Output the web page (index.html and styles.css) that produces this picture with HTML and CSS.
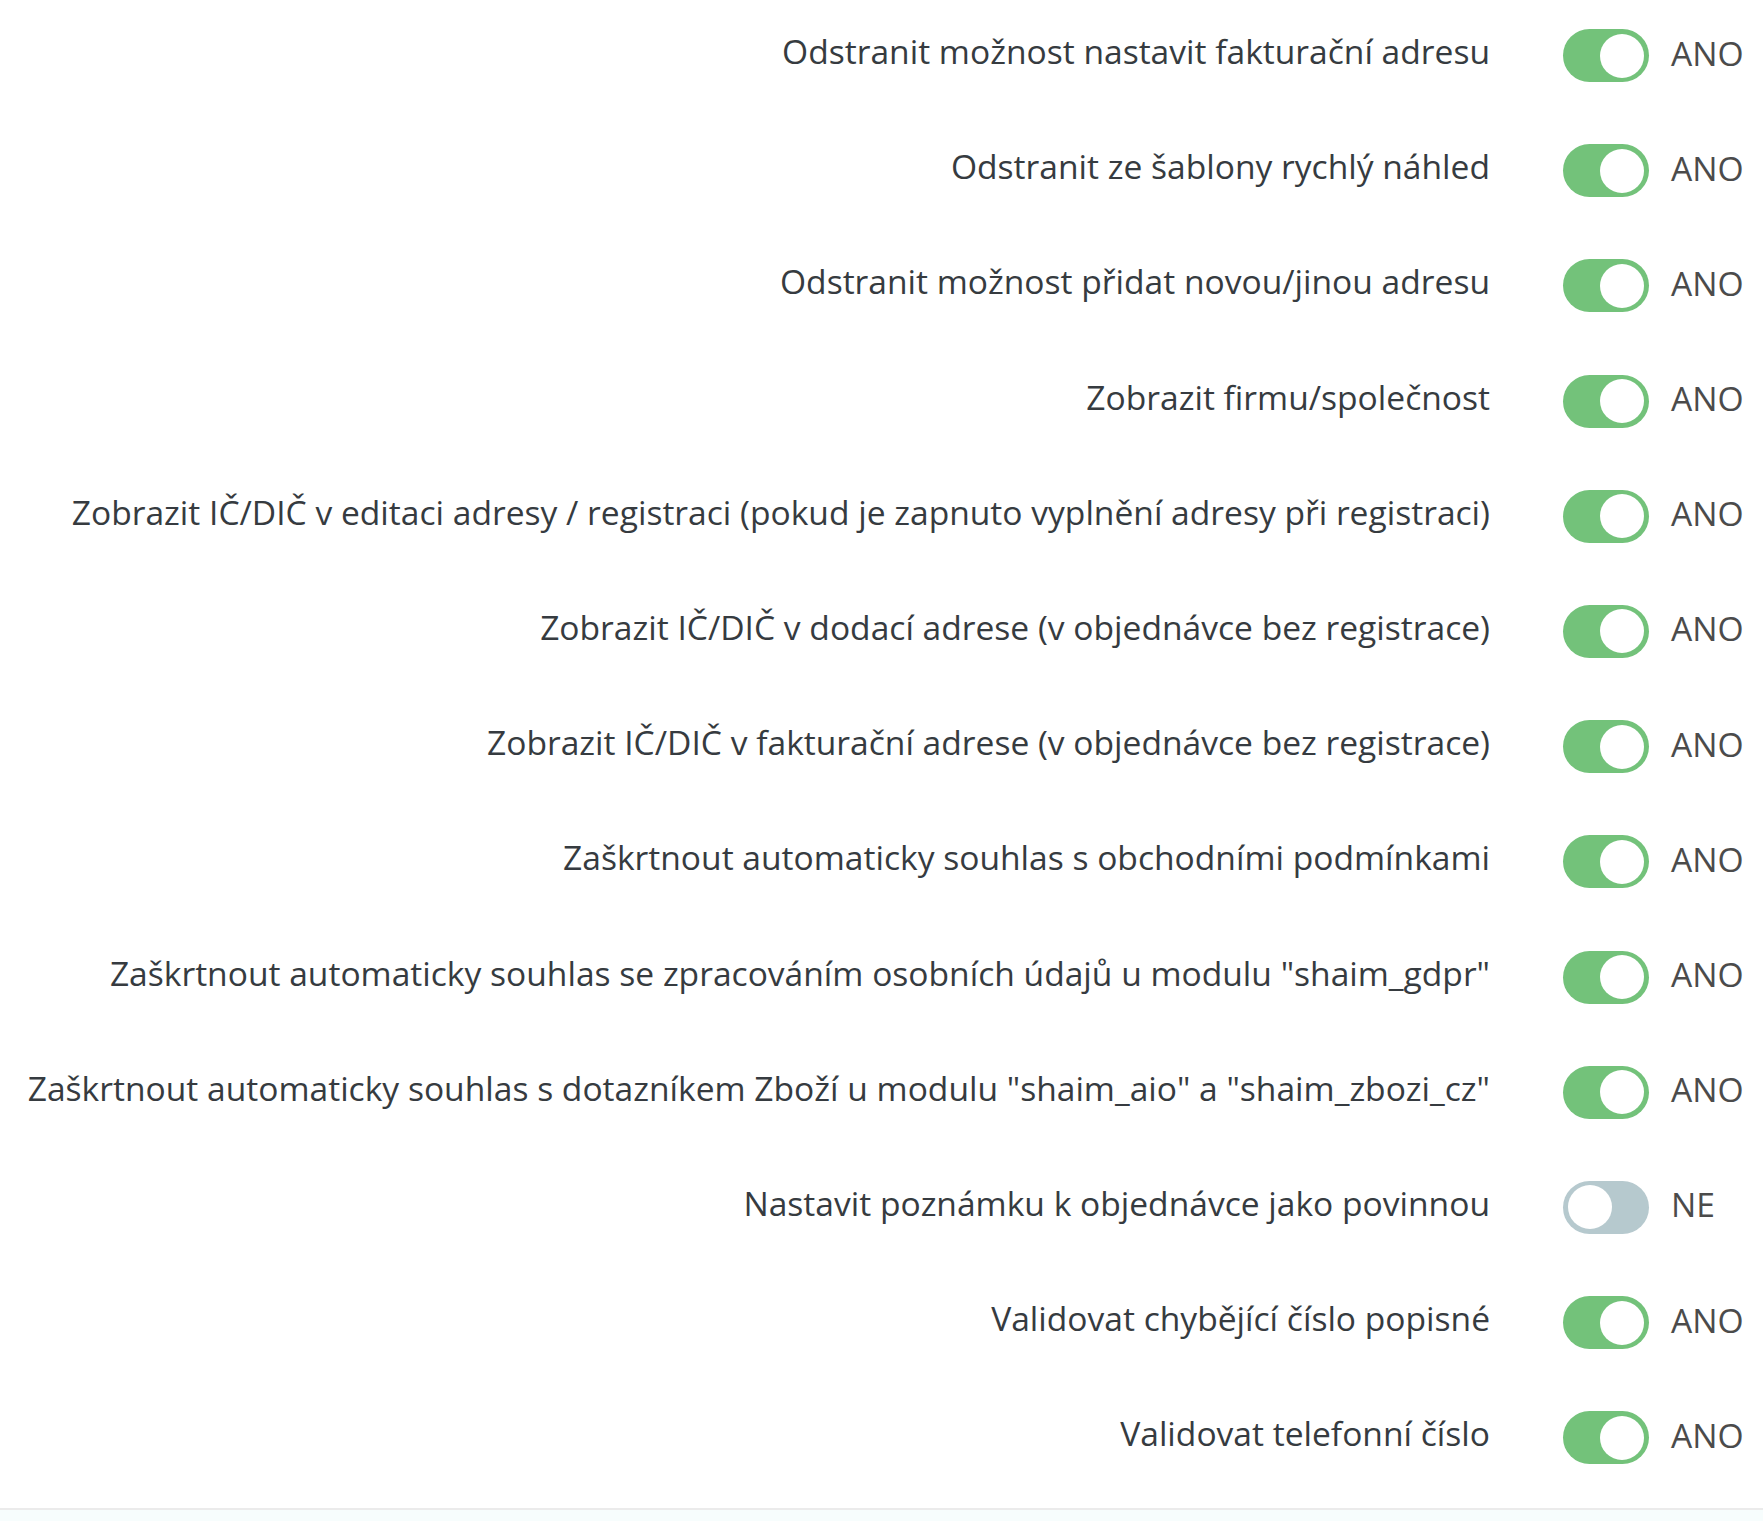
FILE: index.html
```html
<!DOCTYPE html>
<html lang="cs">
<head>
<meta charset="utf-8">
<title>Nastavení</title>
<link rel="stylesheet" href="styles.css">
</head>
<body>
<div class="settings">
  <div class="row"><div class="label">Odstranit možnost nastavit fakturační adresu</div><div class="control"><span class="switch on"><span class="knob"></span></span><span class="value">ANO</span></div></div>
  <div class="row"><div class="label">Odstranit ze šablony rychlý náhled</div><div class="control"><span class="switch on"><span class="knob"></span></span><span class="value">ANO</span></div></div>
  <div class="row"><div class="label">Odstranit možnost přidat novou/jinou adresu</div><div class="control"><span class="switch on"><span class="knob"></span></span><span class="value">ANO</span></div></div>
  <div class="row"><div class="label">Zobrazit firmu/společnost</div><div class="control"><span class="switch on"><span class="knob"></span></span><span class="value">ANO</span></div></div>
  <div class="row"><div class="label">Zobrazit IČ/DIČ v editaci adresy / registraci (pokud je zapnuto vyplnění adresy při registraci)</div><div class="control"><span class="switch on"><span class="knob"></span></span><span class="value">ANO</span></div></div>
  <div class="row"><div class="label">Zobrazit IČ/DIČ v dodací adrese (v objednávce bez registrace)</div><div class="control"><span class="switch on"><span class="knob"></span></span><span class="value">ANO</span></div></div>
  <div class="row"><div class="label">Zobrazit IČ/DIČ v fakturační adrese (v objednávce bez registrace)</div><div class="control"><span class="switch on"><span class="knob"></span></span><span class="value">ANO</span></div></div>
  <div class="row"><div class="label">Zaškrtnout automaticky souhlas s obchodními podmínkami</div><div class="control"><span class="switch on"><span class="knob"></span></span><span class="value">ANO</span></div></div>
  <div class="row"><div class="label">Zaškrtnout automaticky souhlas se zpracováním osobních údajů u modulu "shaim_gdpr"</div><div class="control"><span class="switch on"><span class="knob"></span></span><span class="value">ANO</span></div></div>
  <div class="row"><div class="label">Zaškrtnout automaticky souhlas s dotazníkem Zboží u modulu "shaim_aio" a "shaim_zbozi_cz"</div><div class="control"><span class="switch on"><span class="knob"></span></span><span class="value">ANO</span></div></div>
  <div class="row"><div class="label">Nastavit poznámku k objednávce jako povinnou</div><div class="control"><span class="switch off"><span class="knob"></span></span><span class="value">NE</span></div></div>
  <div class="row"><div class="label">Validovat chybějící číslo popisné</div><div class="control"><span class="switch on"><span class="knob"></span></span><span class="value">ANO</span></div></div>
  <div class="row"><div class="label">Validovat telefonní číslo</div><div class="control"><span class="switch on"><span class="knob"></span></span><span class="value">ANO</span></div></div>
</div>
<div class="footer"></div>
</body>
</html>
```

FILE: styles.css
```css
html, body {
  margin: 0;
  padding: 0;
  background: #ffffff;
}
body {
  font-family: "Open Sans", "Liberation Sans", sans-serif;
  color: #363b40;
}
.settings {
  padding-bottom: 10.4px;
  border-bottom: 2px solid #ebebeb;
}
.row {
  display: grid;
  grid-template-columns: 1fr 273px;
  align-items: center;
  height: 115.2px;
  box-sizing: border-box;
  padding-top: 25px;
  padding-bottom: 37.2px;
}
.label {
  text-align: right;
  font-size: 33.6px;
  line-height: 53px;
  white-space: nowrap;
  padding-bottom: 8px;
}
.control {
  display: flex;
  align-items: center;
  padding-left: 73px;
  height: 53px;
}
.switch {
  position: relative;
  display: block;
  width: 86px;
  height: 53px;
  border-radius: 27px;
  flex: none;
}
.switch.on { background: #73c27a; }
.switch.off { background: #b6c9ce; }
.knob {
  position: absolute;
  top: 4.5px;
  width: 44px;
  height: 44px;
  border-radius: 50%;
  background: #ffffff;
}
.switch.on .knob { right: 5px; }
.switch.off .knob { left: 5px; }
.value {
  margin-left: 22px;
  font-size: 33.6px;
  line-height: 53px;
  color: #4b4b4b;
  padding-bottom: 5px;
}
.footer {
  height: 40px;
  background: #f7fdfd;
}
```
